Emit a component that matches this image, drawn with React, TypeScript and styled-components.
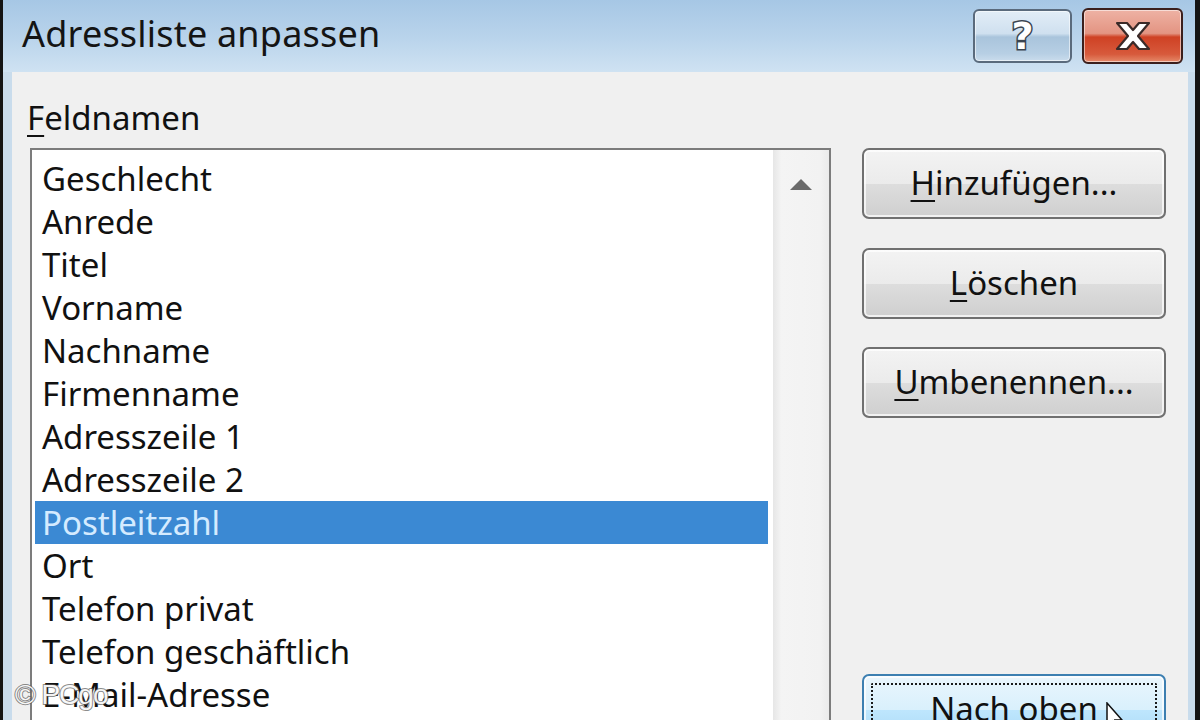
import React from "react";
import styled, { createGlobalStyle } from "styled-components";

const Global = createGlobalStyle`
  html, body {
    margin: 0;
    padding: 0;
    width: 1200px;
    height: 720px;
    overflow: hidden;
    background: #111;
  }
  * { box-sizing: border-box; }
`;

const Window = styled.div`
  position: relative;
  width: 1200px;
  height: 720px;
  overflow: hidden;
  border-left: 3px solid #141414;
  border-right: 5px solid #141414;
  background: #c9dcec;
  display: flex;
  flex-direction: column;
  font-family: "Noto Sans", "Liberation Sans", Arial, sans-serif;
  color: #111;
`;

const TitleBar = styled.div`
  height: 72px;
  flex: none;
  display: flex;
  align-items: center;
  padding: 0 12px 4px 19px;
  background: linear-gradient(to bottom, #a6c7e5 0%, #b8d3eb 50%, #cfe2f2 100%);
`;

const Title = styled.div`
  flex: 1;
  font-size: 36px;
  line-height: 44px;
  color: #141414;
  letter-spacing: 0.2px;
`;

const CaptionButton = styled.div<{ $variant: "help" | "close" }>`
  display: flex;
  align-items: center;
  justify-content: center;
  width: ${(p) => (p.$variant === "close" ? 101 : 99)}px;
  height: ${(p) => (p.$variant === "close" ? 56 : 54)}px;
  margin-left: ${(p) => (p.$variant === "close" ? 10 : 0)}px;
  margin-top: 4px;
  border-radius: 6px;
  border: 2px solid ${(p) => (p.$variant === "close" ? "#3b1f1c" : "#5a6a7c")};
  box-shadow: inset 0 0 0 1px rgba(255, 255, 255, 0.55);
  background: ${(p) =>
    p.$variant === "close"
      ? "linear-gradient(to bottom, #eeb2a4 0%, #e39482 45%, #cf4124 52%, #d75a3c 85%, #e58a6a 100%)"
      : "linear-gradient(to bottom, #e2edf7 0%, #cfe0ef 45%, #a9c4dc 52%, #b7cfe4 85%, #cadcec 100%)"};
`;

const HelpGlyph = styled.span`
  font-family: "DejaVu Sans", "Liberation Sans", sans-serif;
  font-weight: bold;
  font-size: 38px;
  line-height: 38px;
  color: #ffffff;
  -webkit-text-stroke: 3px #3a4450;
  paint-order: stroke fill;
`;

const Frame = styled.div`
  flex: 1;
  display: flex;
  padding: 0 7px 0 9px;
  min-height: 0;
`;

const Client = styled.div`
  flex: 1;
  background: #f0f0f0;
  padding: 24px 0 0 15px;
  display: flex;
  flex-direction: column;
  min-height: 0;
`;

const Label = styled.div`
  font-size: 33px;
  line-height: 43px;
  height: 43px;
  color: #111;
`;

const Accel = styled.span`
  text-decoration: underline;
  text-decoration-thickness: 2px;
  text-underline-offset: 5px;
`;

const Main = styled.div`
  display: flex;
  align-items: flex-start;
  margin-top: 9px;
  padding-left: 3px;
  gap: 31px;
`;

const ListBox = styled.div`
  width: 801px;
  height: 640px;
  border: 2px solid #7c7c7c;
  background: #ffffff;
  display: flex;
  flex: none;
`;

const Items = styled.ul`
  list-style: none;
  margin: 0;
  padding: 7px 5px 0 3px;
  flex: 1;
`;

const Item = styled.li<{ $selected?: boolean }>`
  height: 43px;
  line-height: 43px;
  padding-left: 7px;
  font-size: 33px;
  white-space: nowrap;
  color: ${(p) => (p.$selected ? "#d4ebff" : "#111")};
  background: ${(p) => (p.$selected ? "#3b89d3" : "transparent")};
`;

const ScrollBar = styled.div`
  width: 56px;
  flex: none;
  background: linear-gradient(to right, #e6e6e6 0%, #f4f4f4 15%, #f2f2f2 85%, #ebebeb 100%);
  display: flex;
  justify-content: center;
  padding-top: 28px;
`;

const ButtonColumn = styled.div`
  display: flex;
  flex-direction: column;
  width: 304px;
`;

const DlgButton = styled.div<{ $focused?: boolean; $space?: number }>`
  position: relative;
  height: 71px;
  margin-top: ${(p) => p.$space ?? 0}px;
  border-radius: 7px;
  border: 2px solid ${(p) => (p.$focused ? "#3c7fb1" : "#707070")};
  box-shadow: inset 0 0 0 2px rgba(255, 255, 255, 0.7);
  background: ${(p) =>
    p.$focused
      ? "linear-gradient(to bottom, #eaf6fd 0%, #d9f0fc 50%, #bee6fd 51%, #a7d9f5 100%)"
      : "linear-gradient(to bottom, #f3f3f3 0%, #ebebeb 50%, #dddddd 51%, #cfcfcf 100%)"};
  display: flex;
  align-items: center;
  justify-content: center;
  font-size: 33px;
  line-height: 43px;
  color: #111;
  padding-bottom: 3px;
`;

const FocusRing = styled.div`
  position: absolute;
  inset: 7px;
  border: 2px dotted #1a1a1a;
  border-radius: 2px;
  pointer-events: none;
`;

const Cursor = styled.svg`
  position: absolute;
  left: 242px;
  top: 26px;
`;

const Watermark = styled.div`
  position: absolute;
  left: 12px;
  bottom: 9px;
  font-family: "Liberation Sans", Arial, sans-serif;
  font-size: 28px;
  line-height: 32px;
  color: rgba(255, 255, 255, 0.95);
  -webkit-text-stroke: 2px rgba(90, 90, 90, 0.7);
  paint-order: stroke fill;
  letter-spacing: -1px;
`;

const fields = [
  "Geschlecht",
  "Anrede",
  "Titel",
  "Vorname",
  "Nachname",
  "Firmenname",
  "Adresszeile 1",
  "Adresszeile 2",
  "Postleitzahl",
  "Ort",
  "Telefon privat",
  "Telefon geschäftlich",
  "E-Mail-Adresse",
  "Land",
  "Notizen",
];

export default function App() {
  return (
    <>
      <Global />
      <Window>
        <TitleBar>
          <Title>Adressliste anpassen</Title>
          <CaptionButton $variant="help">
            <HelpGlyph>?</HelpGlyph>
          </CaptionButton>
          <CaptionButton $variant="close">
            <svg width="40" height="30" viewBox="0 0 40 30">
              <path
                d="M4 2 H14 L20 9 L26 2 H36 L25 15 L36 28 H26 L20 21 L14 28 H4 L15 15 Z"
                fill="#ffffff"
                stroke="#3a2a28"
                strokeWidth="2.2"
                strokeLinejoin="round"
              />
            </svg>
          </CaptionButton>
        </TitleBar>
        <Frame>
          <Client>
            <Label>
              <Accel>F</Accel>eldnamen
            </Label>
            <Main>
              <ListBox>
                <Items>
                  {fields.map((f) => (
                    <Item key={f} $selected={f === "Postleitzahl"}>
                      {f}
                    </Item>
                  ))}
                </Items>
                <ScrollBar>
                  <svg width="24" height="14" viewBox="0 0 24 14">
                    <path d="M12 1 L23 12 L1 12 Z" fill="#6a6a6a" />
                  </svg>
                </ScrollBar>
              </ListBox>
              <ButtonColumn>
                <DlgButton>
                  <span>
                    <Accel>H</Accel>inzufügen...
                  </span>
                </DlgButton>
                <DlgButton $space={29}>
                  <span>
                    <Accel>L</Accel>öschen
                  </span>
                </DlgButton>
                <DlgButton $space={28}>
                  <span>
                    <Accel>U</Accel>mbenennen...
                  </span>
                </DlgButton>
                <DlgButton $space={256} $focused>
                  <FocusRing />
                  <span>Nach oben</span>
                  <Cursor width="20" height="30" viewBox="0 0 20 30">
                    <path
                      d="M1 1 L1 24 L6 19 L10 28 L13 27 L9 18 L16 18 Z"
                      fill="#ffffff"
                      stroke="#111"
                      strokeWidth="1.5"
                    />
                  </Cursor>
                </DlgButton>
              </ButtonColumn>
            </Main>
          </Client>
        </Frame>
        <Watermark>© PCgo</Watermark>
      </Window>
    </>
  );
}
